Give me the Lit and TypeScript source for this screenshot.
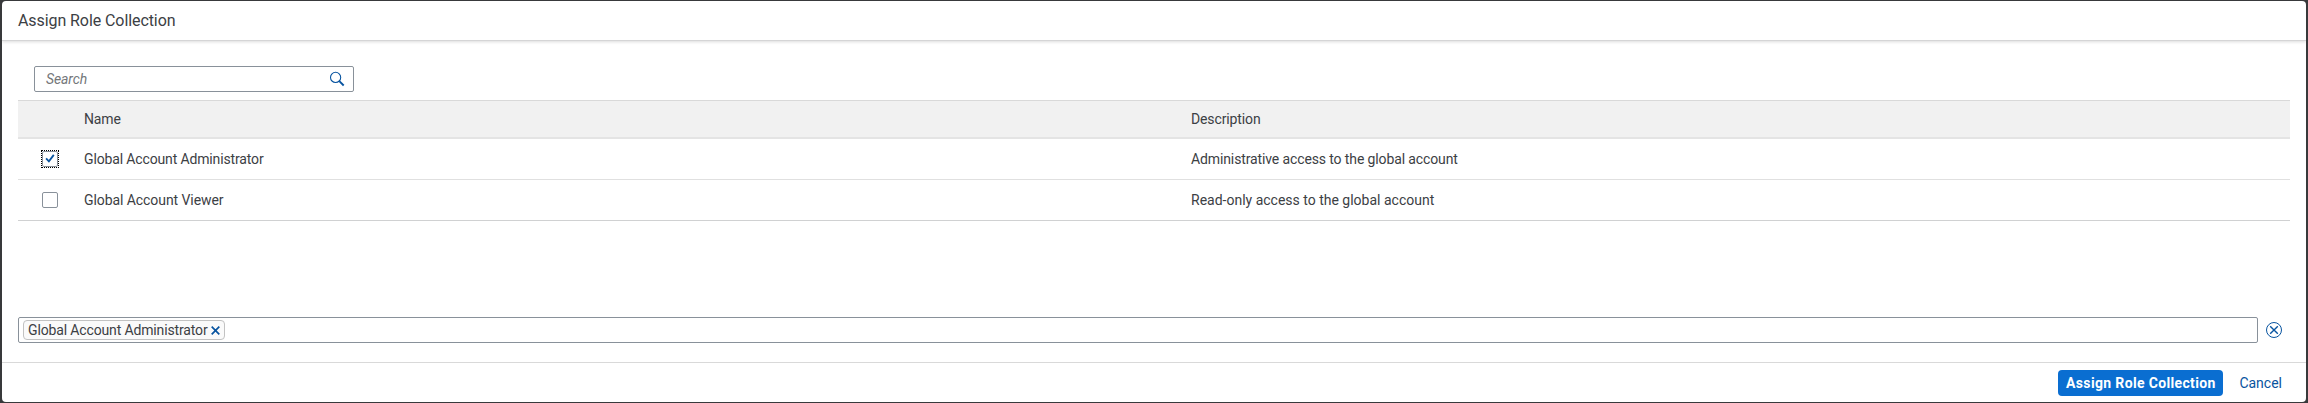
import { LitElement, html, css } from "lit";
import { customElement, state } from "lit/decorators.js";

interface RoleCollection {
  name: string;
  description: string;
  kind: string;
}

@customElement("app-root")
export class AppRoot extends LitElement {
  static styles = css`
    :host {
      display: block;
      box-sizing: border-box;
      height: 403px;
      padding: 1px 2px;
      background: #38393b;
      font-family: Roboto, "Liberation Sans", sans-serif;
      font-size: 14px;
      line-height: 20px;
      color: #3c4044;
    }
    * { box-sizing: border-box; }
    .dialog {
      height: 401px;
      display: flex;
      flex-direction: column;
      background: #fff;
      border-radius: 4px;
      overflow: hidden;
    }
    .title {
      flex: none;
      height: 40px;
      padding: 9px 16px;
      border-bottom: 1px solid #d5d5d6;
      box-shadow: 0 1px 3px rgba(0, 0, 0, 0.14);
      font-size: 16px;
      font-weight: 400;
      margin: 0;
      line-height: 21px;
      letter-spacing: -0.08px;
    }
    .content { flex: 1; padding: 25px 16px 0; display: flex; flex-direction: column; }
    .search {
      width: 320px;
      height: 26px;
      margin: 0 0 8px 16px;
      padding: 0 8px 0 11px;
      border: 1px solid #89919a;
      border-radius: 2px;
      display: flex;
      align-items: center;
      justify-content: space-between;
    }
    .placeholder { font-style: italic; color: #74777a; letter-spacing: -0.1px; }
    .icon { display: block; flex: none; fill: none; stroke: #0854a0; }
    .row {
      display: grid;
      grid-template-columns: 65px 1107px 1fr;
      align-items: center;
      height: 41px;
      border-bottom: 1px solid #e0e0e0;
    }
    .row.last { border-bottom-color: #d0d1d2; }
    .row.head {
      height: 39px;
      border-top: 1px solid #d9d9d9;
      border-bottom: 2px solid #e4e4e4;
      background: #f1f1f1;
      letter-spacing: -0.12px;
    }
    .row > span { padding-left: 1px; }
    .check {
      width: 18px;
      height: 18px;
      justify-self: start;
      margin-left: 23px;
      display: grid;
      place-items: center;
      border: 1px solid transparent;
    }
    .check.focused { border: 1px dotted #000; }
    .box { width: 16px; height: 16px; border: 1px solid #89919a; border-radius: 2px; }
    .name { letter-spacing: -0.14px; }
    .name.viewer { letter-spacing: -0.07px; }
    .desc.admin { letter-spacing: -0.12px; }
    .selection { display: flex; align-items: center; margin-top: auto; margin-bottom: 19px; }
    .tokens {
      flex: none;
      width: 2240px;
      height: 26px;
      border: 1px solid #89919a;
      border-radius: 2px;
      padding: 0 4px;
      display: flex;
      align-items: center;
    }
    .token {
      width: 202px;
      height: 20px;
      padding: 0 4px;
      border: 1px solid #c2c2c2;
      border-radius: 4px;
      background: #fafafa;
      display: flex;
      align-items: center;
      justify-content: space-between;
      line-height: 18px;
      white-space: nowrap;
    }
    .clear { margin-left: 8px; }
    .footer {
      flex: none;
      height: 40px;
      border-top: 1px solid #d9d9d9;
      display: flex;
      align-items: center;
      justify-content: flex-end;
      padding-right: 24px;
    }
    button {
      font: inherit;
      border: 0;
      background: none;
      padding: 0;
      height: 26px;
      color: #0854a0;
      white-space: nowrap;
    }
    .primary {
      width: 165px;
      margin-right: 16px;
      background: #0a6ed1;
      color: #fff;
      border-radius: 4px;
      font-weight: 700;
      letter-spacing: 0.35px;
    }
  `;

  @state() private selected = "Global Account Administrator";

  private rows: RoleCollection[] = [
    { name: "Global Account Administrator", description: "Administrative access to the global account", kind: "admin" },
    { name: "Global Account Viewer", description: "Read-only access to the global account", kind: "viewer" },
  ];

  private row(r: RoleCollection, last: boolean) {
    const on = r.name === this.selected;
    return html`<div class="row ${last ? "last" : ""}">
      <div class="check ${on ? "focused" : ""}" @click=${() => (this.selected = r.name)}>
        <div class="box">
          ${on
            ? html`<svg class="icon" width="14" height="14" viewBox="0 0 14 14"><path d="M3.1 6.4 5.9 9.4 10.8 2.9" stroke-width="1.8" /></svg>`
            : ""}
        </div>
      </div>
      <span class="name ${r.kind}">${r.name}</span>
      <span class="desc ${r.kind}">${r.description}</span>
    </div>`;
  }

  render() {
    return html`<div class="dialog">
      <h1 class="title">Assign Role Collection</h1>
      <div class="content">
        <div class="search">
          <span class="placeholder">Search</span>
          <svg class="icon" width="16" height="16" viewBox="0 0 16 16">
            <circle cx="6.6" cy="6.4" r="5.1" stroke-width="1.1" />
            <path d="M10.3 10.1 14.7 14.5" stroke-width="1.9" />
          </svg>
        </div>
        <div class="row head"><i></i><span>Name</span><span>Description</span></div>
        ${this.rows.map((r, i) => this.row(r, i === this.rows.length - 1))}
        <div class="selection">
          <div class="tokens">
            <div class="token">
              <span class="name">${this.selected}</span>
              <svg class="icon" width="9" height="9" viewBox="0 0 9 9"><path d="M.7.7 8.3 8.3M8.3.7.7 8.3" stroke-width="1.7" /></svg>
            </div>
          </div>
          <svg class="icon clear" width="16" height="16" viewBox="0 0 16 16">
            <circle cx="8" cy="8" r="7.5" stroke-width="1" />
            <path d="M4.2 4.2 11.8 11.8M11.8 4.2 4.2 11.8" stroke-width="1.4" />
          </svg>
        </div>
      </div>
      <div class="footer">
        <button class="primary">Assign Role Collection</button>
        <button>Cancel</button>
      </div>
    </div>`;
  }
}
